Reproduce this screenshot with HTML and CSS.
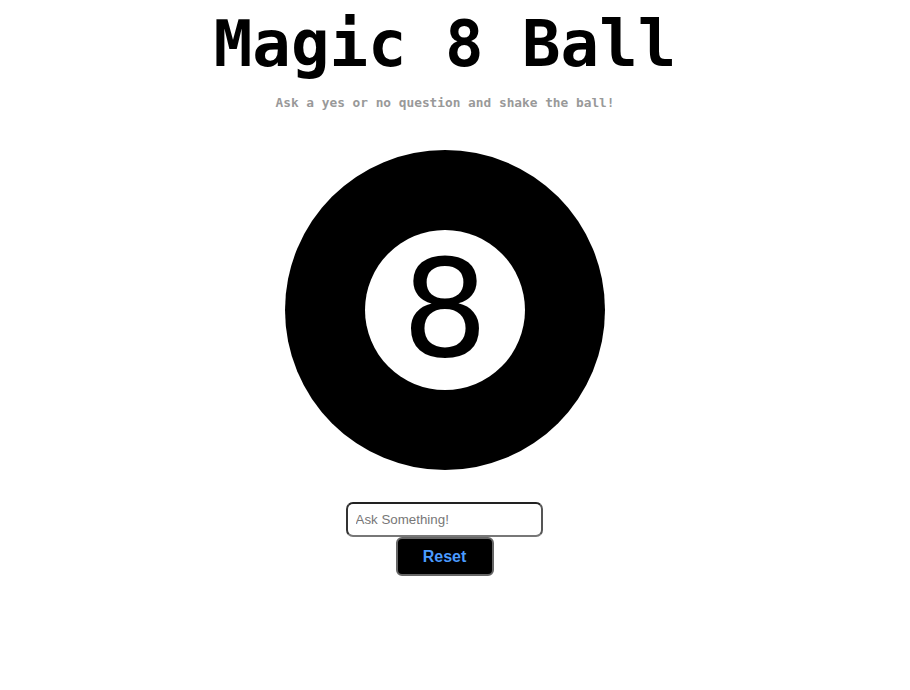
FILE: index.html
```html
<!DOCTYPE html>
<html>
<head>
<meta charset="utf-8">
<link rel="stylesheet" href="styles.css">
</head>
<body>
<main class="app">
  <h1 class="title">Magic 8 Ball</h1>
  <p class="subtitle">Ask a yes or no question and shake the ball!</p>
  <div class="ball">
    <div class="window"><span class="eight">8</span></div>
  </div>
  <div class="controls">
    <input class="question" type="text" placeholder="Ask Something!">
    <button class="reset">Reset</button>
  </div>
</main>
</body>
</html>
```
FILE: styles.css
```css
html, body {
  margin: 0;
  background: #fff;
}
.app {
  display: flex;
  flex-direction: column;
  align-items: center;
  padding-right: 20px;
  font-family: "DejaVu Sans Mono", monospace;
}
.title {
  margin: 9px 0 0 0;
  font-size: 64px;
  line-height: 70px;
  font-weight: bold;
  color: #000;
}
.subtitle {
  margin: 15px 0 0 0;
  font-size: 12.8px;
  line-height: 17px;
  font-weight: bold;
  color: #999;
}
.ball {
  margin-top: 39px;
  width: 320px;
  height: 320px;
  border-radius: 50%;
  background: #000;
  display: flex;
  align-items: center;
  justify-content: center;
}
.window {
  width: 160px;
  height: 160px;
  border-radius: 50%;
  background: #fff;
  display: flex;
  align-items: center;
  justify-content: center;
}
.eight {
  font-family: "DejaVu Sans", sans-serif;
  font-size: 136px;
  line-height: 1;
  color: #000;
  margin-top: -2px;
}
.controls {
  margin-top: 32px;
  display: flex;
  flex-direction: column;
  align-items: center;
}
.question {
  box-sizing: border-box;
  width: 197px;
  height: 35px;
  margin-right: 2px;
  border: 2px solid;
  border-color: #222 #555 #777 #333;
  border-radius: 7px;
  padding: 0 8px;
  font-family: "Liberation Sans", Arial, sans-serif;
  font-size: 13.333px;
  outline: none;
}
.question::placeholder {
  color: #777;
}
.reset {
  box-sizing: border-box;
  margin-top: 0;
  margin-right: 1px;
  width: 98px;
  height: 39px;
  background: #000;
  border: 2px solid #666;
  border-radius: 6px;
  color: #4a9bff;
  font-family: "Liberation Sans", Arial, sans-serif;
  font-weight: bold;
  font-size: 16px;
}
```
